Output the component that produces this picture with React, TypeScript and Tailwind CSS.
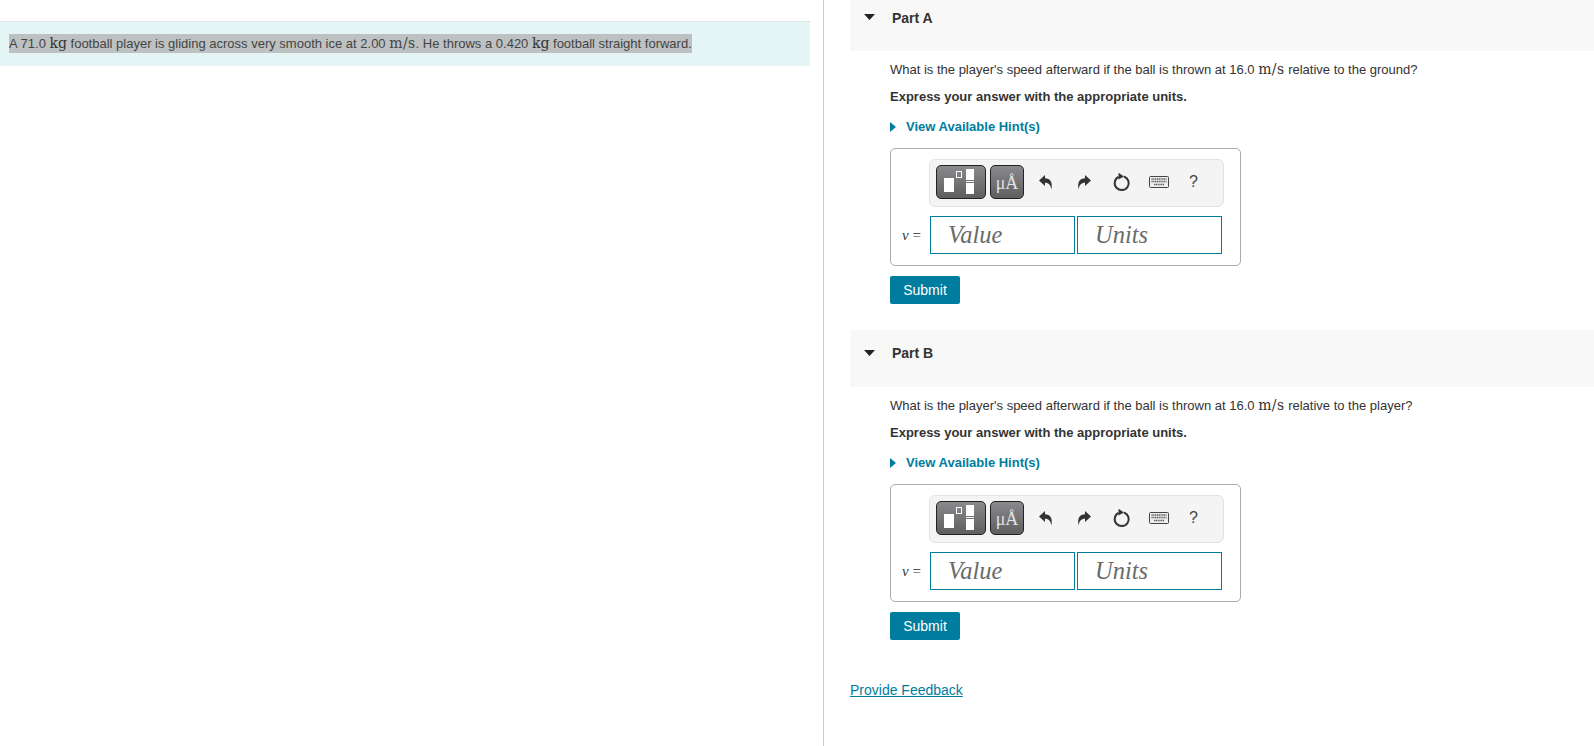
import React from 'react';

const sans = { fontFamily: '"Liberation Sans", Arial, sans-serif' };

const Kg: React.FC = () => (
  <span className="bg-[#bdc1c1] py-[1px] font-['DejaVu_Serif',serif] text-[14px] text-[#333]">kg</span>
);

const Ms: React.FC<{ mark?: boolean }> = ({ mark }) => (
  <span className={mark ? "bg-[#bdc1c1] py-[1px] font-['DejaVu_Serif',serif] text-[14px] tracking-[0.4px]" : "font-['DejaVu_Serif',serif] text-[14px] tracking-[0.4px]"}>m/s</span>
);

const Toolbar: React.FC = () => (
  <div className="h-[48px] w-[295px] ml-[38px] pb-[2px] rounded-[6px] border border-[#e3e3e3] bg-[#f4f4f4] flex items-center pl-[6px]">
    <div className="w-[50px] h-[34px] rounded-[5px] border border-[#222] bg-gradient-to-b from-[#8a8a8c] to-[#5f5f61] relative">
      <div className="absolute left-[7px] top-[12px] w-[10px] h-[14px] bg-white" />
      <div className="absolute left-[19px] top-[5px] w-[6px] h-[7px] border border-white" />
      <div className="absolute left-[29px] top-[3px] w-[8px] h-[11px] bg-white" />
      <div className="absolute left-[29px] top-[15px] w-[8px] h-px bg-white" />
      <div className="absolute left-[29px] top-[17px] w-[8px] h-[11px] bg-white" />
    </div>
    <div className="w-[34px] h-[34px] ml-[4px] rounded-[5px] border border-[#222] bg-gradient-to-b from-[#8a8a8c] to-[#5f5f61] text-[#e4e4e4] text-[18px] flex items-center justify-center font-['Liberation_Serif',serif] pt-[3px]">
      μÅ
    </div>
    <svg className="ml-[14px]" width="16" height="16" viewBox="0 0 16 16">
      <path d="M1 6.5 L7 1 V4.2 C12 4.2 15 8 13.4 15.5 C12.6 11 11 8.8 7 8.8 V12 Z" fill="#333" />
    </svg>
    <svg className="ml-[22px]" width="16" height="16" viewBox="0 0 16 16">
      <path d="M15 6.5 L9 1 V4.2 C4 4.2 1 8 2.6 15.5 C3.4 11 5 8.8 9 8.8 V12 Z" fill="#333" />
    </svg>
    <svg className="ml-[21px]" width="18" height="20" viewBox="0 0 18 20">
      <path d="M11 4.5 A7 7 0 1 1 5.5 4.9" fill="none" stroke="#333" strokeWidth="2" />
      <path d="M5.5 0.8 L11 4.4 L5.5 7.6 Z" fill="#333" />
    </svg>
    <svg className="ml-[18px]" width="20" height="12" viewBox="0 0 20 12">
      <rect x="0.5" y="0.5" width="19" height="11" rx="1" fill="#eee" stroke="#444" />
      <path d="M2.5 3h15M2.5 5.5h15M5 8.5h10" stroke="#555" strokeWidth="1.4" strokeDasharray="1.2 0.6" />
    </svg>
    <span className="ml-[20px] text-[16px] text-[#444]" style={sans}>?</span>
  </div>
);

const AnswerBox: React.FC = () => (
  <div className="w-[351px] h-[118px] rounded-[5px] border border-[#aaa] pt-[10px]">
    <Toolbar />
    <div className="flex items-center mt-[9px] h-[38px]">
      <span className="w-[28px] ml-[11px] text-[15px] text-[#333] font-['Liberation_Serif',serif]"><i>v</i> =</span>
      <div className="w-[145px] h-[38px] border border-[#007c9e] pl-[17px] text-[24.5px] italic text-[#6b6b6b] leading-[35px] font-['Liberation_Serif',serif]">Value</div>
      <div className="w-[145px] h-[38px] ml-[2px] border border-[#007c9e] pl-[17px] text-[24.5px] italic text-[#6b6b6b] leading-[35px] font-['Liberation_Serif',serif]">Units</div>
    </div>
  </div>
);

const Part: React.FC<{ label: string; target: string; clipped?: boolean }> = ({ label, target, clipped }) => (
  <section>
    <div className={clipped ? 'h-[51px] bg-[#f8f8f8] flex items-start pt-[8px]' : 'h-[57px] bg-[#f8f8f8] flex items-start pt-[13px]'}>
      <svg className={clipped ? 'ml-[14px] mt-[6px]' : 'ml-[14px] mt-[7px]'} width="11" height="6" viewBox="0 0 11 6">
        <path d="M0 0 H11 L5.5 6 Z" fill="#222" />
      </svg>
      <span className="ml-[17px] text-[14px] font-bold text-[#333]">{label}</span>
    </div>
    <div className="pl-[40px]">
      <p className="mt-[9px] text-[13px] leading-[18px] text-[#333]">
        What is the player's speed afterward if the ball is thrown at 16.0 <Ms /> relative to the {target}?
      </p>
      <p className="mt-[9px] text-[13px] leading-[18px] font-bold text-[#333]">Express your answer with the appropriate units.</p>
      <div className="mt-[12px] flex items-center h-[18px]">
        <svg width="6" height="10" viewBox="0 0 6 10"><path d="M0 0 L6 5 L0 10 Z" fill="#007c9e" /></svg>
        <span className="ml-[10px] text-[13px] font-bold text-[#007c9e]">View Available Hint(s)</span>
      </div>
      <div className="mt-[12px]"><AnswerBox /></div>
      <button className="mt-[10px] block w-[70px] h-[28px] rounded-[2px] bg-[#007c9e] text-white text-[14px]">Submit</button>
    </div>
  </section>
);

export default function App() {
  return (
    <div className="flex h-[746px] w-[1594px] overflow-hidden bg-white" style={sans}>
      <div className="w-[824px] shrink-0 border-r border-[#c5ced6]">
        <div className="mt-[21px] w-[810px] h-[45px] bg-[#e5f5f6] border-t border-[#dfe5e6] pl-[9px] pt-[11px] text-[13px] leading-[20px] text-[#444] whitespace-nowrap">
          <span className="bg-[#bdc1c1] py-[2px]">
            A 71.0 <Kg /> football player is gliding across very smooth ice at 2.00 <Ms mark />. He throws a 0.420 <Kg /> football straight forward.
          </span>
        </div>
      </div>
      <div className="flex-1 pl-[26px]">
        <Part label="Part A" target="ground" clipped />
        <div className="h-[26px]" />
        <Part label="Part B" target="player" />
        <a className="block mt-[41px] text-[14px] leading-[18px] text-[#007c9e] underline">Provide Feedback</a>
      </div>
    </div>
  );
}
